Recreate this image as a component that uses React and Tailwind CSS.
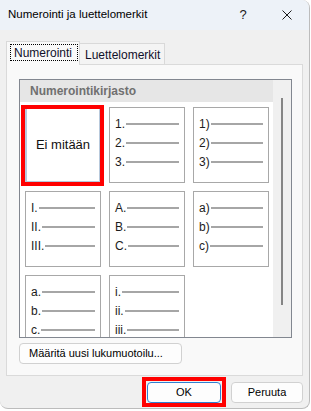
const numbered = [
  ['1.', '2.', '3.'],
  ['1)', '2)', '3)'],
  ['I.', 'II.', 'III.'],
  ['A.', 'B.', 'C.'],
  ['a)', 'b)', 'c)'],
  ['a.', 'b.', 'c.'],
  ['i.', 'ii.', 'iii.'],
];

function ListCell({ items }) {
  return (
    <div className="h-[76px] w-[76px] border border-[#a8a8a8] bg-white px-[5px] pt-[6px]">
      {items.map((label) => (
        <div key={label} className="flex h-[19px] items-center">
          <span className="text-[12px] leading-none text-[#1c1c1c]">{label}</span>
          <span className="ml-[1px] h-[2px] flex-1 bg-[#a6a6a6]" />
        </div>
      ))}
    </div>
  );
}

function NoneCell() {
  return (
    <div className="relative flex h-[76px] w-[76px] items-center justify-center border-2 border-[#b8c9dc] bg-white">
      <span className="text-[13px] text-[#111]">Ei mitään</span>
      {/* red annotation box */}
      <span className="pointer-events-none absolute -bottom-[5px] -left-[6px] -right-[5px] -top-[4px] border-4 border-[#ff0000]" />
    </div>
  );
}

function Button({ children, className = '' }) {
  return (
    <button
      className={`flex h-[21px] items-center justify-center rounded-[4px] border bg-[#fdfdfd] text-[11px] text-black ${className}`}
    >
      {children}
    </button>
  );
}

export default function App() {
  return (
    <div className="h-[411px] w-[311px] bg-white font-['Liberation_Sans',Arial,sans-serif]">
      <div className="flex h-[409px] w-[310px] flex-col overflow-hidden rounded-b-[8px] rounded-tr-[8px] border-b border-r border-[#bcbcbc] bg-[#f0f0f0]">
        {/* Title bar */}
        <div className="flex h-[30px] shrink-0 items-center bg-[#edf2f8]">
          <span className="flex-1 pl-[8px] text-[11.5px] text-black">Numerointi ja luettelomerkit</span>
          <span className="w-[44px] text-center text-[13px] text-[#1a1a1a]">?</span>
          <span className="flex w-[44px] items-center justify-center">
            <svg width="10" height="10" viewBox="0 0 10 10" fill="none" stroke="#1a1a1a" strokeWidth="1">
              <path d="M0.5 0.5L9.5 9.5M9.5 0.5L0.5 9.5" />
            </svg>
          </span>
        </div>

        <div className="flex flex-col px-[6px] pt-[11px]">
          {/* Tabs */}
          <div className="flex h-[24px] items-end">
            <div className="relative z-10 h-[24px] w-[74px] border border-b-0 border-[#d9d9d9] bg-[#f9f9f9] pl-[3px] pt-[2px]">
              <div className="flex h-[17px] w-[68px] items-center border border-dotted border-black pl-[3px] text-[12px] text-[#10102a]">
                Numerointi
              </div>
            </div>
            <div className="flex h-[22px] w-[85px] items-center border border-b-0 border-l-0 border-[#d9d9d9] bg-[#f4f4f4] pl-[5px] text-[12px] text-[#10102a]">
              Luettelomerkit
            </div>
          </div>

          {/* Panel */}
          <div className="-mt-px h-[312px] border border-[#dadada] bg-[#f9f9f9] pl-[12px] pt-[14px]">
            <div className="flex h-[259px] w-[273px] border border-[#828790] bg-white">
              <div className="flex h-full w-[253px] flex-col [clip-path:inset(0_0_0_-8px)]">
                <div className="flex h-[22px] shrink-0 items-center bg-[#e6e6e6] pl-[10px] text-[12px] font-bold text-[#707070]">
                  Numerointikirjasto
                </div>
                <div className="grid grid-cols-[76px_76px_76px] gap-[8px] pl-[5px] pt-[5px]">
                  <NoneCell />
                  {numbered.map((items) => (
                    <ListCell key={items[0]} items={items} />
                  ))}
                </div>
              </div>
              <div className="w-[18px] bg-[#f0f0f0] pl-[8px] pt-[18px]">
                <div className="h-[207px] w-[2px] bg-[#858585]" />
              </div>
            </div>
            <Button className="mt-[5px] h-[20px] w-[163px] justify-start border-[#d1d1d1] pl-[9px]">
              Määritä uusi lukumuotoilu...
            </Button>
          </div>

          {/* Footer */}
          <div className="flex justify-end gap-[10px] pt-[6px]">
            <div className="relative">
              <Button className="w-[74px] border-[#2f7fd1]">OK</Button>
              <span className="pointer-events-none absolute -bottom-[4px] -left-[5px] -right-[5px] -top-[5px] border-4 border-[#ff0000]" />
            </div>
            <Button className="w-[72px] border-[#d1d1d1]">Peruuta</Button>
          </div>
        </div>
      </div>
    </div>
  );
}
